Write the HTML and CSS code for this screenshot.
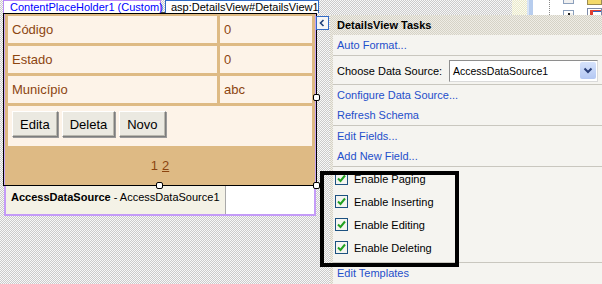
FILE: index.html
```html
<!DOCTYPE html>
<html lang="es">
<head>
    <meta charset="UTF-8">
    <meta name="viewport" content="width=device-width, initial-scale=1.0">
    <title>DetailsView Tasks</title>
    <link rel="stylesheet" href="styles.css">
</head>
<body>
<div class="surface">

    <div class="designer">
        <div class="tabs">
            <span class="tab tab-holder">ContentPlaceHolder1 (Custom)</span>
            <span class="tab-gap"></span>
            <span class="tab tab-control">asp:DetailsView#DetailsView1</span>
        </div>

        <div class="holder">
            <div class="details">
                <div class="grid">
                    <div class="cell">Código</div>
                    <div class="cell">0</div>
                    <div class="cell">Estado</div>
                    <div class="cell">0</div>
                    <div class="cell">Município</div>
                    <div class="cell">abc</div>
                    <div class="cell cell-wide actions">
                        <button class="btn">Edita</button>
                        <button class="btn">Deleta</button>
                        <button class="btn">Novo</button>
                    </div>
                    <div class="cell-wide pager">1 <a class="pager-link">2</a></div>
                </div>

                <span class="smart-tag">
                    <svg width="11" height="12" viewBox="0 0 11 12"><polyline points="6.5,3 3.5,6 6.5,9" fill="none" stroke="#1d3f7a" stroke-width="1.6"/></svg>
                </span>
                <span class="handle handle-right"></span>
                <span class="handle handle-bottom"></span>
                <span class="handle handle-corner"></span>
            </div>

            <div class="datasource">
                <div class="ds-label"><b>AccessDataSource</b> - AccessDataSource1</div>
                <div class="ds-blank"></div>
            </div>
        </div>
    </div>

    <div class="side">
        <div class="backdrop">
            <div class="backdrop-fill"></div>
            <div class="backdrop-pale"></div>
            <div class="backdrop-blue"></div>
            <div class="backdrop-white">
                <div class="dotted"></div>
                <div class="mini-stack">
                    <span class="mini mini-top"></span>
                    <span class="mini mini-bottom"></span>
                </div>
                <div class="tool-stack">
                    <span class="tool tool-top"></span>
                    <span class="tool tool-bottom"></span>
                </div>
            </div>
        </div>

        <div class="tasks">
            <div class="tasks-head">DetailsView Tasks</div>
            <div class="tasks-body">
                <div class="section">
                    <a class="link">Auto Format...</a>
                </div>
                <div class="section source-row">
                    <span class="source-label">Choose Data Source:</span>
                    <span class="combo">
                        <span class="combo-text">AccessDataSource1</span>
                        <span class="combo-btn">
                            <svg width="16" height="17" viewBox="0 0 16 17"><polyline points="4.5,6.5 8,10 11.5,6.5" fill="none" stroke="#2a3f78" stroke-width="2"/></svg>
                        </span>
                    </span>
                </div>
                <div class="section">
                    <a class="link">Configure Data Source...</a>
                    <a class="link">Refresh Schema</a>
                </div>
                <div class="section">
                    <a class="link">Edit Fields...</a>
                    <a class="link">Add New Field...</a>
                </div>
                <div class="section checks">
                    <label class="check"><svg class="box" width="13" height="13" viewBox="0 0 13 13"><rect x="0.5" y="0.5" width="12" height="12" fill="#f4f4f0" stroke="#1c5180"/><polyline points="3,6.5 5.5,9 10,3.5" fill="none" stroke="#21a121" stroke-width="2"/></svg>Enable Paging</label>
                    <label class="check"><svg class="box" width="13" height="13" viewBox="0 0 13 13"><rect x="0.5" y="0.5" width="12" height="12" fill="#f4f4f0" stroke="#1c5180"/><polyline points="3,6.5 5.5,9 10,3.5" fill="none" stroke="#21a121" stroke-width="2"/></svg>Enable Inserting</label>
                    <label class="check"><svg class="box" width="13" height="13" viewBox="0 0 13 13"><rect x="0.5" y="0.5" width="12" height="12" fill="#f4f4f0" stroke="#1c5180"/><polyline points="3,6.5 5.5,9 10,3.5" fill="none" stroke="#21a121" stroke-width="2"/></svg>Enable Editing</label>
                    <label class="check"><svg class="box" width="13" height="13" viewBox="0 0 13 13"><rect x="0.5" y="0.5" width="12" height="12" fill="#f4f4f0" stroke="#1c5180"/><polyline points="3,6.5 5.5,9 10,3.5" fill="none" stroke="#21a121" stroke-width="2"/></svg>Enable Deleting</label>
                </div>
                <div class="section-last">
                    <a class="link">Edit Templates</a>
                </div>
            </div>
        </div>
    </div>

    <div class="callout"></div>
</div>
</body>
</html>
```

FILE: styles.css
```css
html {
  box-sizing: border-box;
}

*,
*:before,
*:after {
  box-sizing: inherit;
}

body{
    margin: 0;
    font-family: "Liberation Sans", Arial, sans-serif;
    font-size: 11px;
}

.surface{
    position: relative;
    display: flex;
    width: 602px;
    height: 284px;
    overflow: hidden;
    background: repeating-conic-gradient(#cbcbcb 0 25%, #f8f8f8 0 50%) 0 0 / 2px 2px;
}

/* left: page designer */
.designer{
    width: 330px;
    flex: none;
}
.tabs{
    display: flex;
    align-items: flex-end;
    height: 13px;
    padding-left: 3px;
}
.tab{
    height: 13px;
    line-height: 12px;
    padding-left: 6px;
    background: #fff;
    border: 1px solid;
    border-bottom: none;
    white-space: nowrap;
}
.tab-holder{
    width: 158px;
    border-color: #b98cf5;
    color: #0000ff;
}
.tab-gap{
    width: 4px;
    height: 2px;
    border-bottom: 1px solid #444;
}
.tab-control{
    width: 154px;
    padding-left: 5px;
    border-color: #316ac5;
    color: #000;
}

.holder{
    margin-left: 3px;
    width: 314px;
}
.details{
    position: relative;
    border: 1px solid #000;
    padding: 2px 4px 3px;
    background: #deba84;
    box-shadow: inset 1px 0 #c7a3f3, inset -1px 0 #c7a3f3;
}
.grid{
    display: grid;
    grid-template-columns: 209px 92px;
    grid-template-rows: 27px 27px 27px 40px 33px;
    gap: 3px;
}
.cell{
    display: flex;
    align-items: center;
    padding-left: 4px;
    background: #fdf3e8;
    color: #8c4510;
    font-size: 13px;
}
.cell-wide{
    grid-column: 1 / -1;
}
.actions{
    align-items: flex-start;
    gap: 4px;
    padding-top: 5px;
}
.btn{
    height: 26px;
    padding: 0 7px;
    font-family: "Liberation Sans", Arial, sans-serif;
    font-size: 13px;
    color: #000;
    background: #ebe9e1;
    border: 1px solid;
    border-color: #fff #7d7d7d #7d7d7d #fff;
    box-shadow: inset -1px -1px #b9b7ae, 1px 1px #9a9a9a;
}
.pager{
    display: flex;
    align-items: center;
    justify-content: center;
    gap: 4px;
    color: #8c4510;
    font-size: 13px;
}
.pager-link{
    text-decoration: underline;
}

.smart-tag{
    position: absolute;
    left: 312px;
    top: 2px;
    width: 13px;
    height: 14px;
    background: #f6f6f6;
    border: 1px solid #316ac5;
}
.smart-tag svg{
    display: block;
}
.handle{
    position: absolute;
    width: 7px;
    height: 7px;
    background: #fff;
    border: 1px solid #000;
    border-radius: 2px;
}
.handle-right{
    left: 309px;
    top: 80px;
}
.handle-bottom{
    left: 152px;
    top: 168px;
}
.handle-corner{
    left: 309px;
    top: 168px;
}

.datasource{
    display: flex;
    margin: 0 1px;
    height: 30px;
    border: 2px solid #c49bf7;
    border-top: none;
}
.ds-label{
    width: 220px;
    padding: 4px 0 0 5px;
    line-height: 15px;
    white-space: nowrap;
    background: #f4f2e6;
    border-right: 1px solid #a9a9a9;
    color: #000;
}
.ds-blank{
    flex: 1;
    background: #fff;
}

/* right: smart tag panel */
.side{
    width: 272px;
    flex: none;
    display: flex;
    flex-direction: column;
}
.backdrop{
    display: flex;
    height: 15px;
}
.backdrop-fill{
    flex: 1;
}
.backdrop-pale{
    width: 15px;
    background: repeating-conic-gradient(#e9e8c8 0 25%, #fbfbf2 0 50%) 0 0 / 2px 2px;
}
.backdrop-blue{
    width: 6px;
    background: #b7cdee;
    border-left: 2px solid #d8e4f6;
}
.backdrop-white{
    display: flex;
    width: 69px;
    background: #fff;
    padding-left: 16px;
}
.dotted{
    width: 1px;
    border-left: 1px dotted #8a8a8a;
}
.mini-stack{
    display: flex;
    flex-direction: column;
    justify-content: space-between;
    margin-left: 13px;
    width: 11px;
}
.mini{
    display: block;
    border: 1px solid #8ca0bc;
    background: #f0f0f0;
}
.mini-top{
    height: 4px;
    border-top: none;
}
.mini-bottom{
    height: 5px;
    border-bottom: none;
    box-shadow: inset 4px 2px #fff, inset 6px 2px #222;
}
.tool-stack{
    display: flex;
    flex-direction: column;
    justify-content: space-between;
    margin-left: 13px;
    width: 15px;
}
.tool{
    display: block;
}
.tool-top{
    height: 5px;
    background: #f3d96a;
    border: 1px solid #9a8a50;
    border-top: none;
}
.tool-bottom{
    height: 7px;
    background: #fff;
    border: 1px solid #7d8aa8;
    border-bottom: none;
    box-shadow: inset 2px 1px #fff, inset 5px 2px #e04030, inset 0 -3px #fff, inset 0 -4px #3060c0;
}

.tasks{
    flex: 1;
    display: flex;
    flex-direction: column;
    background: repeating-conic-gradient(#d5d2c6 0 25%, #efede6 0 50%) 0 0 / 2px 2px;
}
.tasks-head{
    height: 20px;
    line-height: 20px;
    padding-left: 7px;
    font-weight: bold;
    color: #000;
}
.tasks-body{
    flex: 1;
    margin-left: 3px;
    background: #f5f4f0;
}
.section{
    border-bottom: 1px solid #c9c7bf;
}
.link{
    display: block;
    height: 20px;
    line-height: 20px;
    padding-left: 4px;
    color: #1f4fcb;
    text-decoration: none;
}
.source-row{
    display: flex;
    height: 29px;
    padding: 4px 0 0 4px;
}
.source-label{
    width: 112px;
    line-height: 22px;
    color: #000;
}
.combo{
    display: flex;
    width: 149px;
    height: 22px;
    background: #fff;
    border: 1px solid;
    border-color: #8e8e8e #dadada #dadada #8e8e8e;
}
.combo-text{
    flex: 1;
    padding-left: 3px;
    line-height: 20px;
    font-size: 10.5px;
    color: #000;
}
.combo-btn{
    width: 16px;
    height: 17px;
    margin: 1px 1px 0 0;
    background: linear-gradient(#d6e2fb, #b4c8f3);
    border-radius: 2px;
}
.combo-btn svg{
    display: block;
}
.checks{
    height: 96px;
}
.check{
    display: flex;
    align-items: center;
    gap: 6px;
    height: 23px;
    padding-left: 2px;
    color: #000;
}
.box{
    display: block;
    flex: none;
}

.callout{
    position: absolute;
    left: 320px;
    top: 171px;
    width: 139px;
    height: 96px;
    border: 4px solid #000;
}
```
